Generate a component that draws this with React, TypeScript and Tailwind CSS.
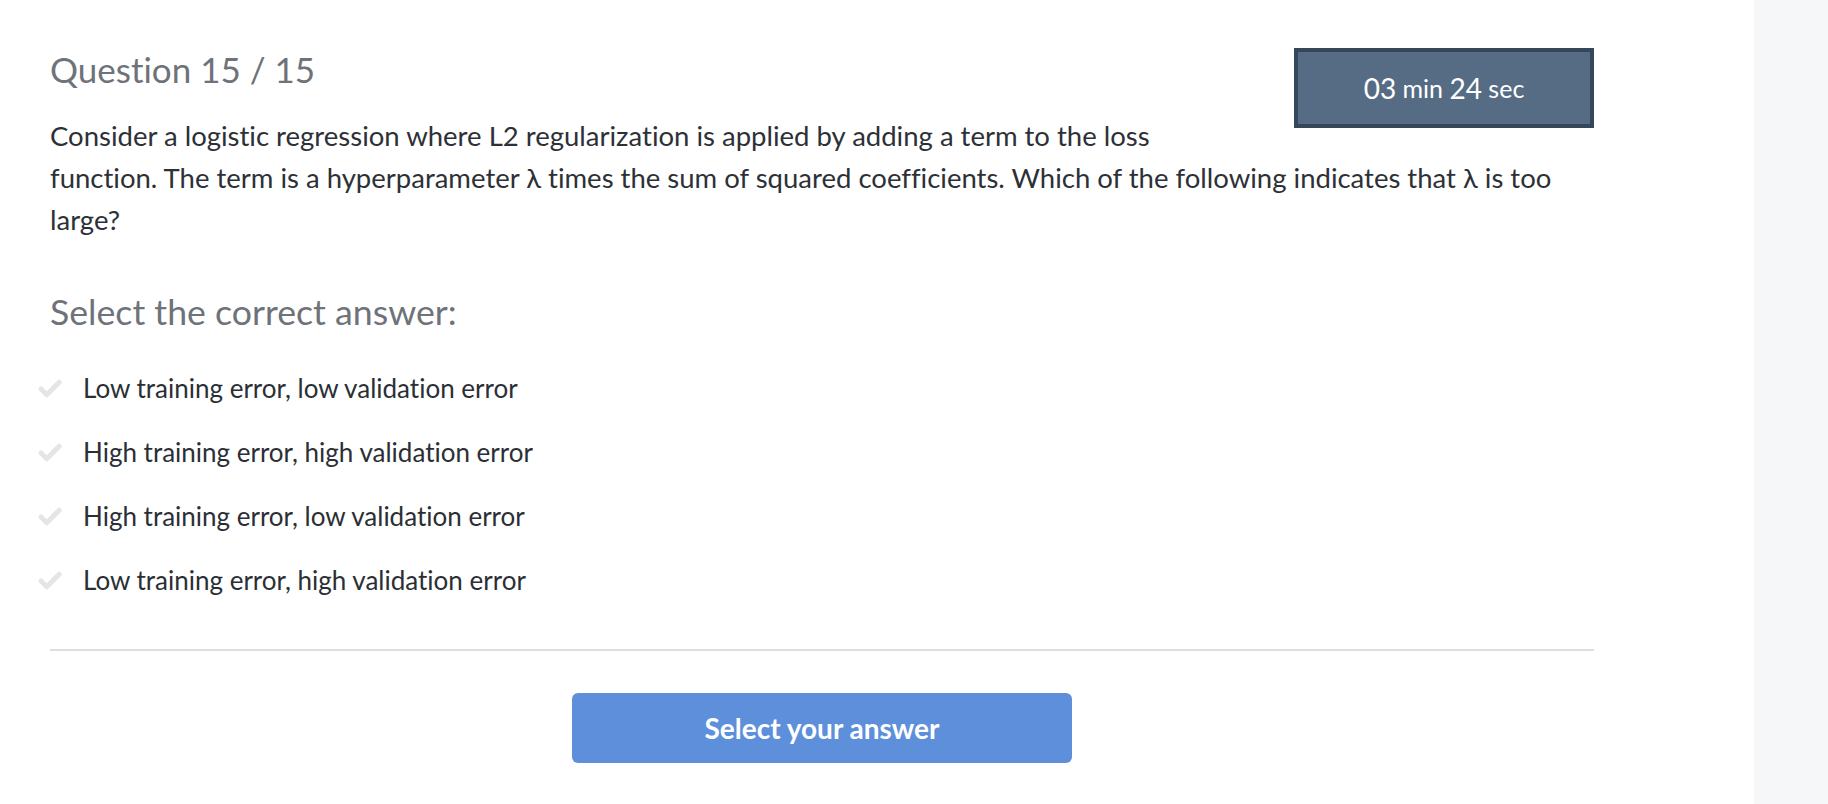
import React from "react";

function CheckIcon() {
  return (
    <svg width="24" height="19" viewBox="0 0 24 19" className="shrink-0">
      <path
        d="M3 10 L8.8 15.8 L21.2 3.2"
        fill="none"
        stroke="#e5e5e5"
        strokeWidth="5"
        strokeLinecap="round"
        strokeLinejoin="round"
      />
    </svg>
  );
}

const options = [
  "Low training error, low validation error",
  "High training error, high validation error",
  "High training error, low validation error",
  "Low training error, high validation error",
];

export default function App() {
  return (
    <div
      className="flex min-h-[804px] w-full bg-white [font-variant-ligatures:no-common-ligatures]"
      style={{ fontFamily: "Lato, 'Noto Sans', sans-serif" }}
    >
      <main className="flex-1 pl-[50px] pr-[160px] pt-[48px]">
        <div className="w-[1544px]">
          <div className="float-right ml-[40px] flex h-[80px] w-[300px] items-center justify-center border-4 border-[#36475a] bg-[#566c84] text-white whitespace-pre">
            <span className="text-[28px] leading-none">03</span>
            <span className="text-[25px] leading-none"> min </span>
            <span className="text-[28px] leading-none">24</span>
            <span className="text-[25px] leading-none"> sec</span>
          </div>
          <h1 className="text-[35px] font-normal leading-[42px] text-[#6e7279]">
            Question 15 / 15
          </h1>
          <p className="mt-[25px] text-[27.5px] leading-[42px] text-[#2d3137]">
            Consider a logistic regression where L2 regularization is applied by adding a term to the loss
            <br />
            function. The term is a hyperparameter λ times the sum of squared coefficients. Which of the following indicates that λ is too
            <br />
            large?
          </p>
          <h2 className="clear-both mt-[51px] text-[35.7px] font-normal leading-[40px] text-[#6e7279]">
            Select the correct answer:
          </h2>
          <ul className="-ml-[12px] mt-[24px]">
            {options.map((o) => (
              <li key={o} className="flex h-[64px] items-center gap-[21px]">
                <CheckIcon />
                <span className="text-[26px] leading-[64px] text-[#2b2f35]">{o}</span>
              </li>
            ))}
          </ul>
          <div className="mt-[37px] h-[2px] w-full bg-[#dedede]" />
          <div className="mt-[42px] flex justify-center">
            <button className="h-[70px] w-[500px] rounded-[6px] bg-[#5e8fdb] text-[28px] font-bold text-white">
              Select your answer
            </button>
          </div>
        </div>
      </main>
      <aside className="w-[74px] shrink-0 bg-[#f6f7f9]" />
    </div>
  );
}
